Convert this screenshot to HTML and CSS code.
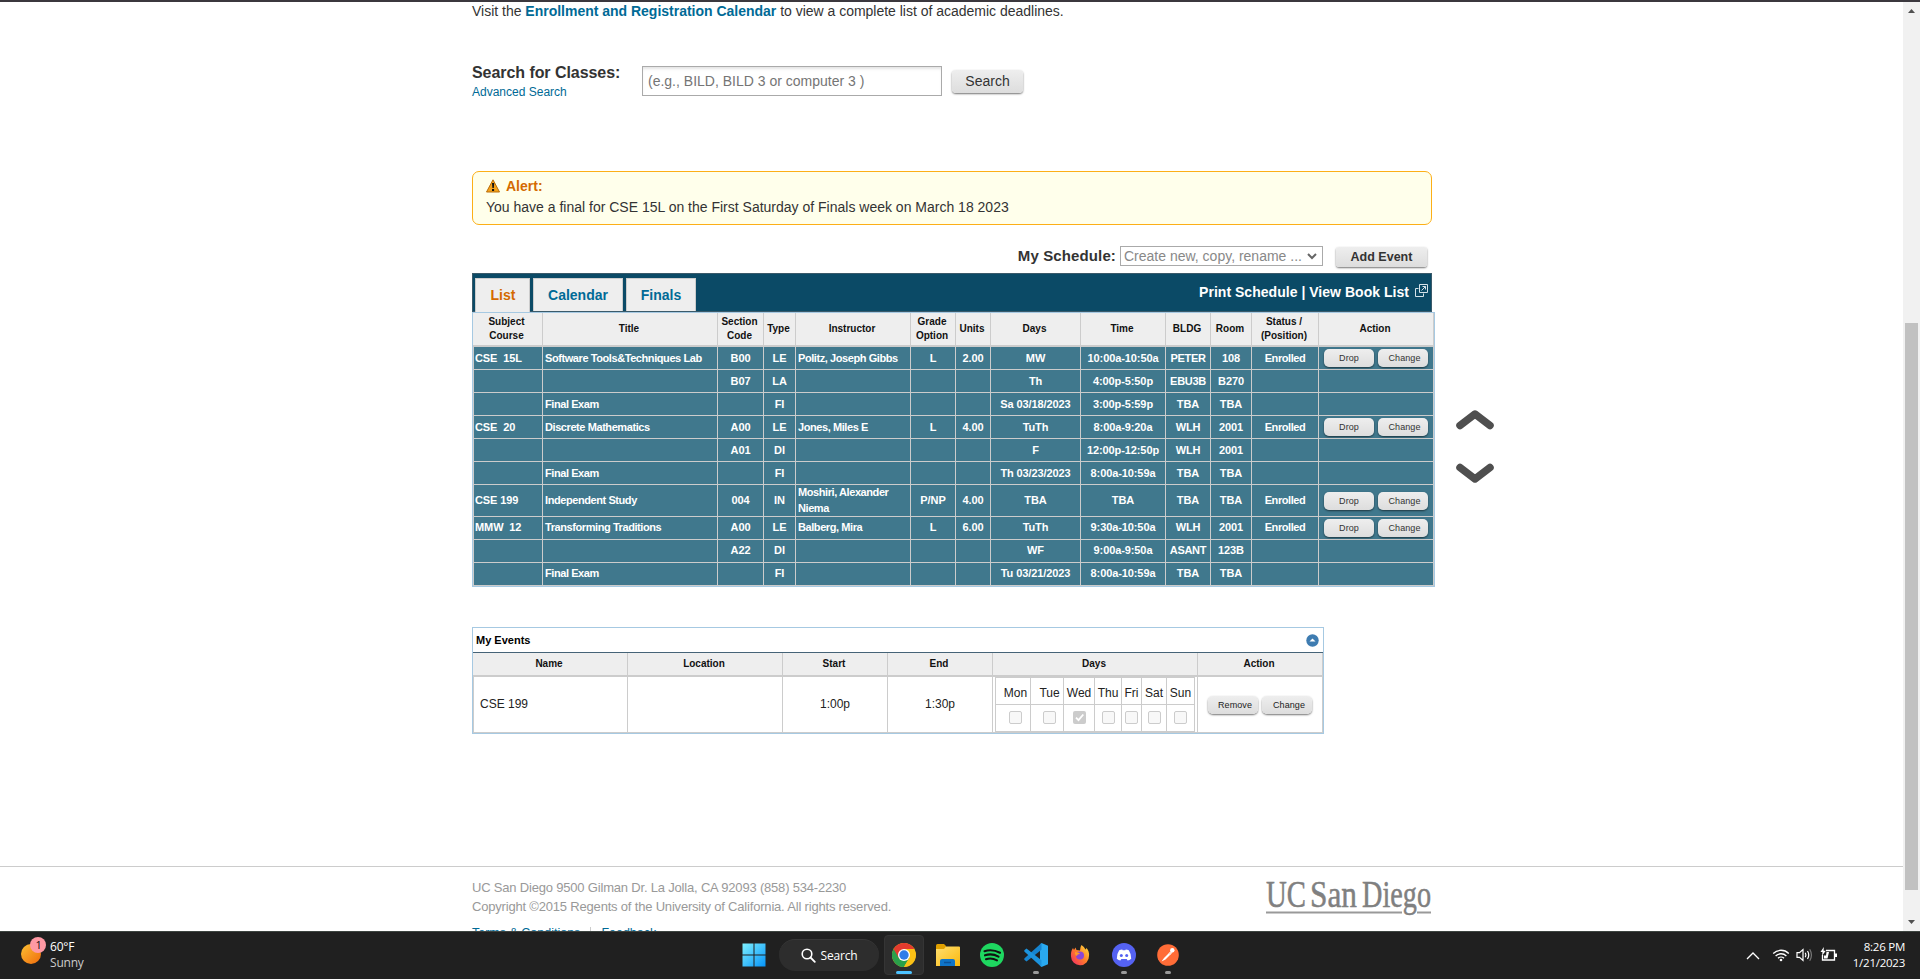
FILE: index.html
```html
<!DOCTYPE html>
<html lang="en">
<head>
<meta charset="utf-8">
<title>WebReg</title>
<link rel="stylesheet" href="styles.css">
</head>
<body>
<div class="screen">
<div class="viewport">
<div class="page">
  <div class="column">
    <p class="intro">Visit the <a class="strong-link">Enrollment and Registration Calendar</a> to view a complete list of academic deadlines.</p>
    <div class="search">
      <div class="search-label"><div class="search-title">Search for Classes:</div><a class="advanced">Advanced Search</a></div>
      <div class="search-input"><span>(e.g., BILD, BILD 3 or computer 3 )</span></div>
      <div class="btn btn-search"><span>Search</span></div>
    </div>
    <div class="alert">
      <div class="alert-head">
        <svg width="14" height="14" viewBox="0 0 14 14"><path d="M7 .8 13.5 13H.5Z" fill="#f5a21b" stroke="#b86c0a" stroke-width="1" stroke-linejoin="round"/><path d="M6 4h2.2l-.4 5H6.4zM6 10h2.1v2H6z" fill="#111"/></svg>
        <span>Alert:</span>
      </div>
      <div class="alert-text">You have a final for CSE 15L on the First Saturday of Finals week on March 18 2023</div>
    </div>
    <div class="toolbar">
      <span class="toolbar-label">My Schedule:</span>
      <div class="select"><span>Create new, copy, rename ...</span><svg width="10" height="7" viewBox="0 0 10 7"><path d="M1 1l4 4 4-4" fill="none" stroke="#666" stroke-width="2"/></svg></div>
      <div class="btn btn-add"><span>Add Event</span></div>
    </div>
    <div class="schedule">
      <div class="schedule-main">
        <div class="bar">
          <div class="tab tab-list tab-active"><span>List</span></div>
          <div class="tab tab-cal"><span>Calendar</span></div>
          <div class="tab tab-fin"><span>Finals</span></div>
          <div class="bar-links"><span>Print Schedule | View Book List</span><svg width="13" height="13" viewBox="0 0 13 13" fill="none" stroke="#d5e2e9" stroke-width="1"><path d="M4.5.5h8v8h-8zM3.500 4.500h-3v8h8v-3M6.500 6.500l4-4M7.500 2.500h3v3"/></svg></div>
        </div>
        <table class="classes">
          <colgroup><col class="c70"><col class="c175"><col class="c46"><col class="c32"><col class="c115"><col class="c45"><col class="c35"><col class="c90"><col class="c85"><col class="c45"><col class="c41"><col class="c67"><col class="c115"></colgroup>
          <thead><tr><th class="off">Subject<br>Course</th><th>Title</th><th>Section<br>Code</th><th>Type</th><th>Instructor</th><th>Grade<br>Option</th><th>Units</th><th>Days</th><th>Time</th><th>BLDG</th><th>Room</th><th>Status /<br>(Position)</th><th>Action</th></tr></thead>
          <tbody>
          <tr><td class="l">CSE&nbsp; 15L</td><td class="l t">Software Tools&amp;Techniques Lab</td><td>B00</td><td>LE</td><td class="l t">Politz, Joseph Gibbs</td><td>L</td><td>2.00</td><td>MW</td><td>10:00a-10:50a</td><td class="b">PETER</td><td>108</td><td class="t">Enrolled</td><td class="act"><div class="acts"><div class="btn mini"><span>Drop</span></div><div class="btn mini chg"><span>Change</span></div></div></td></tr>
          <tr><td></td><td></td><td>B07</td><td>LA</td><td></td><td></td><td></td><td>Th</td><td>4:00p-5:50p</td><td class="b">EBU3B</td><td>B270</td><td></td><td></td></tr>
          <tr><td></td><td class="l t">Final Exam</td><td></td><td>FI</td><td></td><td></td><td></td><td>Sa 03/18/2023</td><td>3:00p-5:59p</td><td>TBA</td><td>TBA</td><td></td><td></td></tr>
          <tr><td class="l">CSE&nbsp; 20</td><td class="l t">Discrete Mathematics</td><td>A00</td><td>LE</td><td class="l t">Jones, Miles E</td><td>L</td><td>4.00</td><td>TuTh</td><td>8:00a-9:20a</td><td>WLH</td><td>2001</td><td class="t">Enrolled</td><td class="act"><div class="acts"><div class="btn mini"><span>Drop</span></div><div class="btn mini chg"><span>Change</span></div></div></td></tr>
          <tr><td></td><td></td><td>A01</td><td>DI</td><td></td><td></td><td></td><td>F</td><td>12:00p-12:50p</td><td>WLH</td><td>2001</td><td></td><td></td></tr>
          <tr><td></td><td class="l t">Final Exam</td><td></td><td>FI</td><td></td><td></td><td></td><td>Th 03/23/2023</td><td>8:00a-10:59a</td><td>TBA</td><td>TBA</td><td></td><td></td></tr>
          <tr class="tall"><td class="l">CSE 199</td><td class="l t">Independent Study</td><td>004</td><td>IN</td><td class="l t">Moshiri, Alexander<br>Niema</td><td>P/NP</td><td>4.00</td><td>TBA</td><td>TBA</td><td>TBA</td><td>TBA</td><td class="t">Enrolled</td><td class="act"><div class="acts"><div class="btn mini"><span>Drop</span></div><div class="btn mini chg"><span>Change</span></div></div></td></tr>
          <tr class="up1"><td class="l">MMW&nbsp; 12</td><td class="l t">Transforming Traditions</td><td>A00</td><td>LE</td><td class="l t">Balberg, Mira</td><td>L</td><td>6.00</td><td>TuTh</td><td>9:30a-10:50a</td><td>WLH</td><td>2001</td><td class="t">Enrolled</td><td class="act"><div class="acts"><div class="btn mini"><span>Drop</span></div><div class="btn mini chg"><span>Change</span></div></div></td></tr>
          <tr class="up1"><td></td><td></td><td>A22</td><td>DI</td><td></td><td></td><td></td><td>WF</td><td>9:00a-9:50a</td><td class="b">ASANT</td><td>123B</td><td></td><td></td></tr>
          <tr class="up1"><td></td><td class="l t">Final Exam</td><td></td><td>FI</td><td></td><td></td><td></td><td>Tu 03/21/2023</td><td>8:00a-10:59a</td><td>TBA</td><td>TBA</td><td></td><td></td></tr>
          </tbody>
        </table>
      </div>
      <div class="movers">
        <svg width="38" height="21" viewBox="0 0 38 21"><path d="M4 16.500 19 5l15 11.500" fill="none" stroke="#4f4f4f" stroke-width="7.500" stroke-linecap="round" stroke-linejoin="round"/></svg>
        <svg width="38" height="21" viewBox="0 0 38 21"><path d="M4 4.500 19 16 34 4.500" fill="none" stroke="#4f4f4f" stroke-width="7.500" stroke-linecap="round" stroke-linejoin="round"/></svg>
      </div>
    </div>
    <div class="events">
      <div class="events-title"><span>My Events</span><svg width="13" height="13" viewBox="0 0 13 13"><circle cx="6.500" cy="6.500" r="6.200" fill="#3e7cb1"/><path d="M3.500 7.500 6.500 4.500l3 3z" fill="#fff"/></svg></div>
      <table class="evt">
        <colgroup><col class="c155"><col class="c155"><col class="c105"><col class="c105"><col class="c205"><col class="c125"></colgroup>
        <thead><tr><th>Name</th><th>Location</th><th>Start</th><th>End</th><th>Days</th><th>Action</th></tr></thead>
        <tbody><tr><td class="name">CSE 199</td><td></td><td class="when">1:00p</td><td class="when">1:30p</td>
          <td class="days-cell"><div class="days">
            <div class="d d1">Mon</div><div class="d d2">Tue</div><div class="d">Wed</div><div class="d">Thu</div><div class="d">Fri</div><div class="d">Sat</div><div class="d">Sun</div>
            <div class="k d1"><i class="box"></i></div><div class="k d2"><i class="box"></i></div><div class="k"><i class="box on"><svg width="13" height="13" viewBox="0 0 13 13"><path d="M3 6.700 5.500 9.200 10.300 3.500" fill="none" stroke="#fff" stroke-width="1.800"/></svg></i></div><div class="k"><i class="box"></i></div><div class="k"><i class="box"></i></div><div class="k"><i class="box"></i></div><div class="k"><i class="box"></i></div>
          </div></td>
          <td><div class="evt-acts"><div class="btn mini"><span>Remove</span></div><div class="btn mini"><span>Change</span></div></div></td></tr></tbody>
      </table>
    </div>
  </div>
  <div class="footer">
    <div class="footer-text">
      <div class="addr1">UC San Diego 9500 Gilman Dr. La Jolla, CA 92093 (858) 534-2230</div>
      <div class="addr2">Copyright ©2015 Regents of the University of California. All rights reserved.</div>
      <div class="footer-links"><a>Terms &amp; Conditions</a><i></i><a>Feedback</a></div>
    </div>
    <svg class="logo" width="167" height="40" viewBox="0 0 167 40"><text x="1" y="28" textLength="40" lengthAdjust="spacingAndGlyphs">UC</text><text x="45" y="28" textLength="47" lengthAdjust="spacingAndGlyphs">San</text><text x="97" y="28" textLength="69" lengthAdjust="spacingAndGlyphs">Diego</text><path d="M1 33.500h136M152 33.500h14" stroke="#999" stroke-width="1.800"/></svg>
  </div>
</div>
<div class="scroll">
  <svg width="17" height="18" viewBox="0 0 17 18"><path d="M5 11h7L8.500 7z" fill="#505050"/></svg>
  <div class="track"><div class="thumb"></div></div>
  <svg width="17" height="17" viewBox="0 0 17 17"><path d="M5 6h7l-3.500 4z" fill="#505050"/></svg>
</div>
</div>
<div class="taskbar">
  <div class="weather">
    <svg width="30" height="34" viewBox="0 0 30 34"><defs><linearGradient id="sun" x1="0" y1="0" x2="1" y2="1"><stop offset="0" stop-color="#fcc133"/><stop offset="1" stop-color="#ef6a0c"/></linearGradient></defs><circle cx="11" cy="19" r="10" fill="url(#sun)"/><circle cx="18" cy="10" r="8" fill="#ff99a4"/><text class="badge" x="15.500" y="14">1</text></svg>
    <div class="weather-text"><div class="temp">60°F</div><div class="cond">Sunny</div></div>
  </div>
  <div class="apps">
    <div class="app win"><svg width="24" height="24" viewBox="0 0 24 24"><defs><linearGradient id="w" x1="0" y1="0" x2="1" y2="1" gradientUnits="objectBoundingBox"><stop offset="0" stop-color="#7df0ff"/><stop offset="1" stop-color="#0593f8"/></linearGradient></defs><path d="M.5.500h11v11H.5zM12.500.500h11v11h-11zM.5 12.500h11v11H.5zM12.500 12.500h11v11h-11z" fill="url(#w)"/></svg></div>
    <div class="pill"><svg width="15" height="15" viewBox="0 0 15 15"><circle cx="6" cy="6" r="4.800" fill="none" stroke="#fff" stroke-width="1.600"/><path d="M9.500 9.500l4.300 4.300" stroke="#fff" stroke-width="1.800" stroke-linecap="round"/></svg><span>Search</span></div>
    <div class="app current"><svg width="24" height="24" viewBox="0 0 24 24"><circle cx="12" cy="12" r="12" fill="#fbc116"/><path d="M12 12 1.600 6A12 12 0 0 0 12 24l5.200-9z" fill="#2aa04a"/><path d="M1.600 6A12 12 0 0 1 22.400 6H12l-5.200 9z" fill="#e33b2e"/><path d="M22.400 6.500H12v5l5.200 3.500L12 24A12 12 0 0 0 22.400 6.500z" fill="#fbc116"/><circle cx="12" cy="12" r="6" fill="#fff"/><circle cx="12" cy="12" r="4.700" fill="#2f7de9"/></svg><i class="mark wide"></i></div>
    <div class="app"><svg width="24" height="24" viewBox="0 0 24 24"><defs><linearGradient id="fo" x1="0" y1="0" x2="1" y2="1"><stop offset="0" stop-color="#ffdf70"/><stop offset="1" stop-color="#fbb80c"/></linearGradient></defs><path d="M0 2.500Q0 1 1.500 1H8l2 2v5H0z" fill="#e0a000"/><path d="M0 6h8l2-2.500h13q1 0 1 1V23H0z" fill="url(#fo)"/><path d="M4 23v-5q0-2 2-2h11q2 0 2 2v5z" fill="#0f74c8"/><path d="M8 19.500h7" stroke="#0b5299" stroke-width="1.500"/></svg></div>
    <div class="app"><svg width="24" height="24" viewBox="0 0 24 24"><circle cx="12" cy="12" r="12" fill="#1ed760"/><path d="M4.500 8.200Q12 5.600 20 9.700M5 12.300Q12 10 18.500 13.700M6 16.200Q11.500 14.300 17 17.300" fill="none" stroke="#111" stroke-width="2.100" stroke-linecap="round"/></svg></div>
    <div class="app"><svg width="24" height="24" viewBox="0 0 24 24"><path d="M17.500 0 24 2.800v18.400L17.500 24l-1.500-1.500V1.500z" fill="#29a9f0"/><path d="M17.500 0v6.800L2.500 18.600.3 16.800v-1.200z" fill="#1684cf"/><path d="M17.500 24v-6.800L2.500 5.400.3 7.200v1.200z" fill="#1c93dd"/></svg><i class="mark"></i></div>
    <div class="app"><svg width="24" height="24" viewBox="0 0 24 24"><defs><linearGradient id="ff" x1="1" y1="0" x2="0" y2="1"><stop offset="0" stop-color="#ffe53a"/><stop offset=".5" stop-color="#ff7b2a"/><stop offset="1" stop-color="#f0246a"/></linearGradient></defs><path d="M13.500 2q3 2 4 4.500 1-.5.800-1.800Q21.500 8 21 13a9 9 0 0 1-18 .500q-.5-5 2-8.500l1 2 1.500-2.500 1 2.500 3.500.500q0-3.500 1.500-5.500z" fill="url(#ff)"/><circle cx="12" cy="12.500" r="4" fill="#8b45d6"/><path d="M7 9q4 0 5 2-3 0-3 2-2.500-1-2-4z" fill="#ff9a27"/></svg></div>
    <div class="app"><svg width="24" height="24" viewBox="0 0 24 24"><circle cx="12" cy="12" r="12" fill="#5562f2"/><path d="M7.200 7.300q1.500-.8 3-.9l.5.900h2.600l.5-.9q1.500.1 3 .9 2.700 4 2.400 8.500-1.700 1.400-3.600 1.700l-.9-1.500H9.300l-.9 1.500q-1.900-.3-3.600-1.700-.3-4.500 2.400-8.500z" fill="#fff"/><circle cx="9.300" cy="12.400" r="1.500" fill="#5562f2"/><circle cx="14.700" cy="12.400" r="1.500" fill="#5562f2"/></svg><i class="mark"></i></div>
    <div class="app"><svg width="24" height="24" viewBox="0 0 24 24"><circle cx="12" cy="12" r="10.800" fill="#ff6c37"/><path d="M5.500 18.500 8 15l6-6 1.500 1.500-6 6z" fill="#fff"/><path d="M12.500 10.500l2.500-2.500 1.500 1.500-2.500 2.500z" fill="#ffe0d2"/><circle cx="16.300" cy="7.300" r="2.200" fill="#fff"/></svg><i class="mark"></i></div>
  </div>
  <div class="tray">
    <svg class="up" width="14" height="8" viewBox="0 0 14 8"><path d="M1 7l6-6 6 6" fill="none" stroke="#fff" stroke-width="1.300"/></svg>
    <svg class="wifi" width="18" height="14" viewBox="0 0 18 14" fill="none" stroke="#fff" stroke-width="1.300"><path d="M1.200 5.500a11 11 0 0 1 15.600 0M3.600 8a7.600 7.600 0 0 1 10.800 0M6 10.300a4.300 4.300 0 0 1 6 0"/><circle cx="9" cy="12" r="1.300" fill="#fff" stroke="none"/></svg>
    <svg class="vol" width="17" height="14" viewBox="0 0 17 14" fill="none" stroke="#fff" stroke-width="1.200"><path d="M1 4.700h2.500L7 1.500v11L3.500 9.300H1zM9.300 4.700q1.300 2.300 0 4.600M11.500 3q2.500 4 0 8"/><path d="M13.700 1.300q3.500 5.700 0 11.400" stroke="#777"/></svg>
    <svg class="bat" width="18" height="15" viewBox="0 0 18 15"><path d="M6 3.500h8.500v9.500h-12V8" fill="none" stroke="#fff" stroke-width="1.300"/><path d="M6.500 5H9L7.500 11.500H4V8.500H6zM15 6.500h2v3.500h-2z" fill="#fff"/><path d="M3.800 0 .5 5h2L2 8.800 5.800 3.700H3.600z" fill="#fff"/></svg>
    <div class="clock"><div>8:26 PM</div><div class="date">1/21/2023</div></div>
  </div>
</div>
</div>
</body>
</html>
```
FILE: styles.css
```css
* { box-sizing: border-box; }
body { margin: 0; font-family: "Liberation Sans", Arial, sans-serif; color: #333; background: #fff; }
.screen { width: 1920px; height: 979px; overflow: hidden; display: flex; flex-direction: column; }
.viewport { height: 931px; border-top: 2px solid #3b383e; display: flex; overflow: hidden; }
.page { width: 1903px; height: 929px; overflow: hidden; }
.column { margin-left: 472px; width: 1040px; height: 864px; }
.intro { margin: 0; font-size: 14px; line-height: 18px; white-space: nowrap; letter-spacing: -.01px; }
.strong-link { color: #006a96; font-weight: bold; }

.search { display: flex; margin-top: 46px; height: 30px; }
.search-label { width: 170px; white-space: nowrap; }
.search-title { font-size: 16px; font-weight: bold; line-height: 14px; letter-spacing: -.06px; }
.advanced { display: block; font-size: 12px; line-height: 16px; margin-top: 4px; color: #006a96; }
.search-input { width: 300px; height: 30px; border: 1px solid #aaa; display: flex; align-items: center; padding-left: 5px; font-size: 14px; color: #757575; box-shadow: inset 0 3px 3px -1px #e4e4e4; white-space: nowrap; }
.btn { display: flex; align-items: center; justify-content: center; background: linear-gradient(#eee, #ddd); border-radius: 4px; box-shadow: 0 1px 2px rgba(0,0,0,.55); color: #333; white-space: nowrap; }
.btn-search { width: 71px; height: 23px; margin: 4px 0 0 10px; font-size: 14px; padding-bottom: 1px; }

.alert { margin-top: 75px; width: 960px; height: 54px; border: 1px solid #fcaf17; border-radius: 7px; background: #ffffeb; padding: 5px 0 0 13px; }
.alert-head { display: flex; gap: 6px; align-items: center; height: 18px; color: #d46a00; font-weight: bold; font-size: 14px; }
.alert-text { font-size: 14px; line-height: 21px; margin-top: 2px; white-space: nowrap; }

.toolbar { margin-top: 20px; height: 28px; width: 960px; display: flex; justify-content: flex-end; padding-right: 5px; font-size: 14px; }
.toolbar-label { font-size: 15px; font-weight: bold; line-height: 22px; white-space: nowrap; margin-right: 4px; letter-spacing: .12px; }
.select { width: 203px; height: 20px; margin-top: 1px; border: 1px solid #aaa; display: flex; align-items: center; justify-content: space-between; padding: 0 5px 0 3px; color: #888; white-space: nowrap; }
.btn-add { width: 91px; height: 20px; margin: 2px 0 0 13px; font-weight: bold; font-size: 12.500px; border-radius: 3px; padding-bottom: 1px; }

.schedule { display: flex; }
.schedule-main { width: 963px; }
.bar { width: 960px; height: 39px; background: #0b4a66; border: 1px solid #3a5a6a; display: flex; padding: 4px 2px 0; font-weight: bold; }
.tab { height: 33px; background: #eee; border: 1px solid #ccc; border-bottom: 0; display: flex; align-items: center; justify-content: center; font-size: 14px; color: #006a96; }
.tab-active { height: 34px; color: #d46a00; padding: 0 0 2px 1px; }
.tab-list { width: 55px; }
.tab-cal { width: 90px; margin-left: 3px; }
.tab-fin { width: 70px; margin-left: 3px; }
.bar-links { margin-left: auto; margin-right: 1px; display: flex; gap: 6px; color: #fff; font-size: 14px; letter-spacing: .03px; height: 28px; align-items: center; white-space: nowrap; }
.bar-links svg { margin-top: -4px; }

table { border-collapse: separate; border-spacing: 0; table-layout: fixed; }
th, td { padding: 0; }
.classes { width: 963px; border: 1px solid #a6c9e2; }
.c70 { width: 70px; } .c175 { width: 175px; } .c46 { width: 46px; } .c32 { width: 32px; } .c115 { width: 115px; } .c45 { width: 45px; }
.c35 { width: 35px; } .c90 { width: 90px; } .c85 { width: 85px; } .c41 { width: 41px; } .c67 { width: 67px; }
.c155 { width: 155px; } .c105 { width: 105px; } .c205 { width: 205px; } .c125 { width: 125px; }
th { background: #eee; color: #111; font-size: 10px; line-height: 14px; padding-right: 2px; border-right: 1px solid #ccc; border-bottom: 2px solid #ccc; white-space: nowrap; text-align: center; }
.classes th { height: 34px; }
.classes td { height: 23px; background: #40788d; color: #fff; font-size: 11px; line-height: 16px; letter-spacing: -.1px; font-weight: bold; border-right: 1px solid #ccc; border-bottom: 1px solid #ccc; text-align: center; white-space: nowrap; }
.classes td:first-child { border-left: 1px solid #ccc; padding-left: 1px; }
.classes .tall td { height: 32px; line-height: 15.500px; }
.classes .up1 td { padding-bottom: 2px; }
.classes .up1 .act { padding-bottom: 0; }
.classes .l { text-align: left; padding-left: 2px; }
.classes .t { letter-spacing: -.42px; }
.classes .b { letter-spacing: -.3px; }
.acts { display: flex; gap: 4px; padding-left: 5px; }
.mini { width: 50px; height: 18px; font-size: 9px; font-weight: normal; line-height: 12px; border-radius: 5px; letter-spacing: .1px; }
.chg { padding-left: 3px; }

.movers { margin: 136px 0 0 21px; display: flex; flex-direction: column; gap: 33px; }

.events { margin-top: 40px; width: 852px; height: 107px; border: 1px solid #a6c9e2; }
.events-title { height: 25px; border-bottom: 1px solid #456377; display: flex; justify-content: space-between; align-items: center; padding: 0 4px 0 3px; color: #000; font-size: 11px; font-weight: bold; }
.evt { width: 850px; }
.evt th { height: 24px; }
.evt td { height: 56px; font-size: 12px; color: #222; text-align: center; border-right: 1px solid #ccc; border-bottom: 1px solid #ccc; }
.evt .name { text-align: left; padding: 0 0 2px 6px; border-left: 1px solid #ccc; }
.evt .when { padding-bottom: 2px; }
.days { margin-left: 2px; width: 200px; display: grid; grid-template-columns: 35px 33px 31px 27px 20px 25px 28px; grid-template-rows: 27px 27px; border-top: 1px solid #ccc; border-left: 1px solid #ccc; height: 55px; }
.d, .k { border-right: 1px solid #ccc; border-bottom: 1px solid #ccc; display: flex; align-items: center; justify-content: center; }
.d { padding-top: 3px; }
.k { padding-bottom: 2px; }
.d1 { padding-left: 5px; } .d2 { padding-left: 5px; }
.box { display: block; width: 13px; height: 13px; border: 1px solid #ccc; border-radius: 2px; background: #f8f8f8; }
.box.on { border: 0; background: #ccc; }
.box svg { display: block; }
.evt-acts { display: flex; gap: 4px; padding: 0 0 0 10px; }
.evt-acts .mini { color: #222; padding-left: 4px; }

.footer { border-top: 1px solid #ccc; height: 64px; padding: 0 471px 0 472px; display: flex; justify-content: space-between; color: #999; font-size: 13px; letter-spacing: -.19px; white-space: nowrap; }
.addr1 { margin-top: 11px; line-height: 19px; }
.addr2 { line-height: 19px; }
.footer-links { display: flex; align-items: center; margin-top: 9px; line-height: 16px; font-size: 12.500px; letter-spacing: 0; color: #006a96; }
.footer-links i { width: 1px; height: 13px; background: #ccc; margin: 0 10px; }
.logo { margin-top: 12px; overflow: visible; letter-spacing: 0; }
.logo text { font-family: "Liberation Serif", serif; font-size: 38px; fill: #808080; stroke: #808080; stroke-width: .5px; }

.scroll { width: 17px; height: 929px; background: #f1f1f1; display: flex; flex-direction: column; }
.scroll svg { display: block; }
.track { height: 894px; padding: 303px 2px 0; }
.thumb { height: 567px; background: #c1c1c1; }

.taskbar { height: 48px; background: #202020; border-top: 1px solid #3d4440; display: flex; justify-content: space-between; color: #fff; font-family: "Open Sans", "Noto Sans", sans-serif; font-size: 12px; }
.weather { width: 730px; flex: none; padding: 3px 0 0 20px; display: flex; }
.badge { font: 11px "Open Sans", sans-serif; fill: #111; }
.weather-text { line-height: 16px; padding-top: 4px; }
.temp { letter-spacing: -.2px; }
.cond { color: #ccc; letter-spacing: -.2px; }
.apps { width: 470px; flex: none; display: flex; align-items: flex-start; padding-top: 3px; gap: 4px; }
.app { width: 40px; height: 40px; flex: none; display: flex; flex-direction: column; align-items: center; padding-top: 8px; border-radius: 4px; }
.app svg { display: block; flex: none; }
.win { margin-left: 4px; }
.pill { width: 100px; height: 32px; flex: none; margin: 4px 1px 0; border-radius: 16px; background: #2d2d2d; border-top: 1px solid #383838; display: flex; align-items: center; justify-content: center; gap: 5px; }
.pill span { letter-spacing: -.2px; }
.current { background: #2d2d2d; border: 1px solid #353535; padding-top: 7px; }
.mark { width: 6px; height: 3px; flex: none; border-radius: 2px; background: #999; margin-top: 4px; }
.wide { width: 16px; background: #4cc2ff; }
.tray { flex: 1; display: flex; justify-content: flex-end; padding-right: 15px; }
.tray svg { margin-top: 16px; flex: none; }
.tray .up { margin-top: 20px; margin-right: 12px; }
.tray .wifi { margin-right: 6px; }
.tray .vol { margin-right: 7px; }
.tray .bat { margin-top: 15px; }
.clock { width: 67px; text-align: right; line-height: 16px; padding-top: 7px; font-size: 11.500px; letter-spacing: -.25px; }
```
